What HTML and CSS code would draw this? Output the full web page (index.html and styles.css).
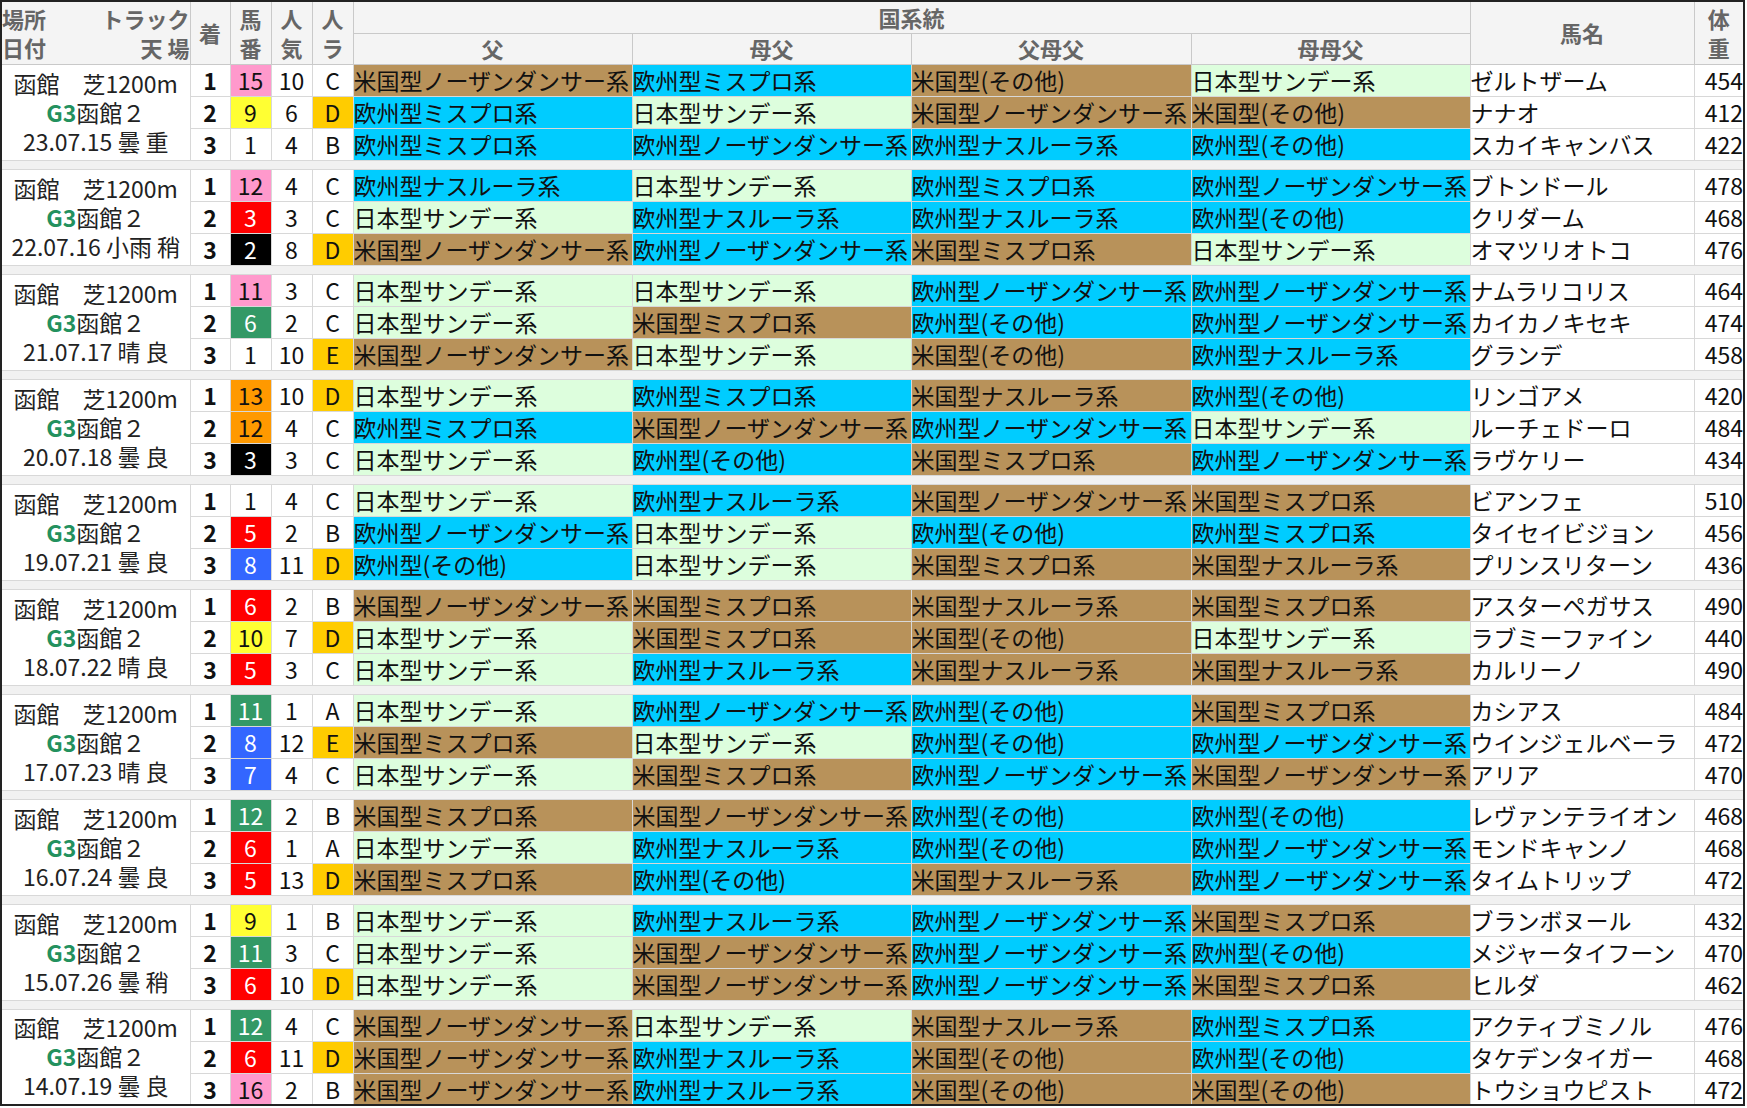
FILE: index.html
```html
<!DOCTYPE html>
<html lang="ja">
<head>
<meta charset="utf-8">
<title>函館２歳ステークス 国系統</title>
<link rel="stylesheet" href="styles.css">
</head>
<body>
<table class="tbl">
<colgroup>
<col class="c-race"><col class="c-rk"><col class="c-bn"><col class="c-pp"><col class="c-ra">
<col class="c-k"><col class="c-k"><col class="c-k2"><col class="c-k">
<col class="c-nm"><col class="c-wt">
</colgroup>
<thead>
<tr class="h1">
<th rowspan="2" class="hplace"><div class="hl"><span>場所</span><span>トラック</span></div><div class="hl"><span>日付</span><span>天&nbsp;場</span></div></th>
<th rowspan="2" class="hrk">着</th>
<th rowspan="2" class="h2l">馬<br>番</th>
<th rowspan="2" class="h2l">人<br>気</th>
<th rowspan="2" class="h2l">人<br>ラ</th>
<th colspan="4" class="hk">国系統</th>
<th rowspan="2" class="hnm">馬名</th>
<th rowspan="2" class="h2l">体<br>重</th>
</tr>
<tr class="h2">
<th class="hsub">父</th><th class="hsub">母父</th><th class="hsub">父母父</th><th class="hsub">母母父</th>
</tr>
</thead>
<tbody>
<!-- 2023 -->
<tr class="r"><td rowspan="3" class="race"><div>函館　芝1200m</div><div><span class="g3">G3</span>函館２</div><div>23.07.15 曇 重</div></td><td class="rk">1</td><td class="bn w8">15</td><td class="pp">10</td><td class="ra">C</td><td class="a">米国型ノーザンダンサー系</td><td class="e">欧州型ミスプロ系</td><td class="a">米国型(その他)</td><td class="j">日本型サンデー系</td><td class="nm">ゼルトザーム</td><td class="wt">454</td></tr>
<tr class="r"><td class="rk">2</td><td class="bn w5">9</td><td class="pp">6</td><td class="ra hi">D</td><td class="e">欧州型ミスプロ系</td><td class="j">日本型サンデー系</td><td class="a">米国型ノーザンダンサー系</td><td class="a">米国型(その他)</td><td class="nm">ナナオ</td><td class="wt">412</td></tr>
<tr class="r"><td class="rk">3</td><td class="bn w1">1</td><td class="pp">4</td><td class="ra">B</td><td class="e">欧州型ミスプロ系</td><td class="e">欧州型ノーザンダンサー系</td><td class="e">欧州型ナスルーラ系</td><td class="e">欧州型(その他)</td><td class="nm">スカイキャンバス</td><td class="wt">422</td></tr>
<tr class="sep"><td colspan="11"></td></tr>
<!-- 2022 -->
<tr class="r"><td rowspan="3" class="race"><div>函館　芝1200m</div><div><span class="g3">G3</span>函館２</div><div>22.07.16 小雨 稍</div></td><td class="rk">1</td><td class="bn w8">12</td><td class="pp">4</td><td class="ra">C</td><td class="e">欧州型ナスルーラ系</td><td class="j">日本型サンデー系</td><td class="e">欧州型ミスプロ系</td><td class="e">欧州型ノーザンダンサー系</td><td class="nm">ブトンドール</td><td class="wt">478</td></tr>
<tr class="r"><td class="rk">2</td><td class="bn w3">3</td><td class="pp">3</td><td class="ra">C</td><td class="j">日本型サンデー系</td><td class="e">欧州型ナスルーラ系</td><td class="e">欧州型ナスルーラ系</td><td class="e">欧州型(その他)</td><td class="nm">クリダーム</td><td class="wt">468</td></tr>
<tr class="r"><td class="rk">3</td><td class="bn w2">2</td><td class="pp">8</td><td class="ra hi">D</td><td class="a">米国型ノーザンダンサー系</td><td class="e">欧州型ノーザンダンサー系</td><td class="a">米国型ミスプロ系</td><td class="j">日本型サンデー系</td><td class="nm">オマツリオトコ</td><td class="wt">476</td></tr>
<tr class="sep"><td colspan="11"></td></tr>
<!-- 2021 -->
<tr class="r"><td rowspan="3" class="race"><div>函館　芝1200m</div><div><span class="g3">G3</span>函館２</div><div>21.07.17 晴 良</div></td><td class="rk">1</td><td class="bn w8">11</td><td class="pp">3</td><td class="ra">C</td><td class="j">日本型サンデー系</td><td class="j">日本型サンデー系</td><td class="e">欧州型ノーザンダンサー系</td><td class="e">欧州型ノーザンダンサー系</td><td class="nm">ナムラリコリス</td><td class="wt">464</td></tr>
<tr class="r"><td class="rk">2</td><td class="bn w6">6</td><td class="pp">2</td><td class="ra">C</td><td class="j">日本型サンデー系</td><td class="a">米国型ミスプロ系</td><td class="e">欧州型(その他)</td><td class="e">欧州型ノーザンダンサー系</td><td class="nm">カイカノキセキ</td><td class="wt">474</td></tr>
<tr class="r"><td class="rk">3</td><td class="bn w1">1</td><td class="pp">10</td><td class="ra hi">E</td><td class="a">米国型ノーザンダンサー系</td><td class="j">日本型サンデー系</td><td class="a">米国型(その他)</td><td class="e">欧州型ナスルーラ系</td><td class="nm">グランデ</td><td class="wt">458</td></tr>
<tr class="sep"><td colspan="11"></td></tr>
<!-- 2020 -->
<tr class="r"><td rowspan="3" class="race"><div>函館　芝1200m</div><div><span class="g3">G3</span>函館２</div><div>20.07.18 曇 良</div></td><td class="rk">1</td><td class="bn w7">13</td><td class="pp">10</td><td class="ra hi">D</td><td class="j">日本型サンデー系</td><td class="e">欧州型ミスプロ系</td><td class="a">米国型ナスルーラ系</td><td class="e">欧州型(その他)</td><td class="nm">リンゴアメ</td><td class="wt">420</td></tr>
<tr class="r"><td class="rk">2</td><td class="bn w7">12</td><td class="pp">4</td><td class="ra">C</td><td class="e">欧州型ミスプロ系</td><td class="a">米国型ノーザンダンサー系</td><td class="e">欧州型ノーザンダンサー系</td><td class="j">日本型サンデー系</td><td class="nm">ルーチェドーロ</td><td class="wt">484</td></tr>
<tr class="r"><td class="rk">3</td><td class="bn w2">3</td><td class="pp">3</td><td class="ra">C</td><td class="j">日本型サンデー系</td><td class="e">欧州型(その他)</td><td class="a">米国型ミスプロ系</td><td class="e">欧州型ノーザンダンサー系</td><td class="nm">ラヴケリー</td><td class="wt">434</td></tr>
<tr class="sep"><td colspan="11"></td></tr>
<!-- 2019 -->
<tr class="r"><td rowspan="3" class="race"><div>函館　芝1200m</div><div><span class="g3">G3</span>函館２</div><div>19.07.21 曇 良</div></td><td class="rk">1</td><td class="bn w1">1</td><td class="pp">4</td><td class="ra">C</td><td class="j">日本型サンデー系</td><td class="e">欧州型ナスルーラ系</td><td class="a">米国型ノーザンダンサー系</td><td class="a">米国型ミスプロ系</td><td class="nm">ビアンフェ</td><td class="wt">510</td></tr>
<tr class="r"><td class="rk">2</td><td class="bn w3">5</td><td class="pp">2</td><td class="ra">B</td><td class="e">欧州型ノーザンダンサー系</td><td class="j">日本型サンデー系</td><td class="e">欧州型(その他)</td><td class="e">欧州型ミスプロ系</td><td class="nm">タイセイビジョン</td><td class="wt">456</td></tr>
<tr class="r"><td class="rk">3</td><td class="bn w4">8</td><td class="pp">11</td><td class="ra hi">D</td><td class="e">欧州型(その他)</td><td class="j">日本型サンデー系</td><td class="a">米国型ミスプロ系</td><td class="a">米国型ナスルーラ系</td><td class="nm">プリンスリターン</td><td class="wt">436</td></tr>
<tr class="sep"><td colspan="11"></td></tr>
<!-- 2018 -->
<tr class="r"><td rowspan="3" class="race"><div>函館　芝1200m</div><div><span class="g3">G3</span>函館２</div><div>18.07.22 晴 良</div></td><td class="rk">1</td><td class="bn w3">6</td><td class="pp">2</td><td class="ra">B</td><td class="a">米国型ノーザンダンサー系</td><td class="a">米国型ミスプロ系</td><td class="a">米国型ナスルーラ系</td><td class="a">米国型ミスプロ系</td><td class="nm">アスターペガサス</td><td class="wt">490</td></tr>
<tr class="r"><td class="rk">2</td><td class="bn w5">10</td><td class="pp">7</td><td class="ra hi">D</td><td class="j">日本型サンデー系</td><td class="a">米国型ミスプロ系</td><td class="a">米国型(その他)</td><td class="j">日本型サンデー系</td><td class="nm">ラブミーファイン</td><td class="wt">440</td></tr>
<tr class="r"><td class="rk">3</td><td class="bn w3">5</td><td class="pp">3</td><td class="ra">C</td><td class="j">日本型サンデー系</td><td class="e">欧州型ナスルーラ系</td><td class="a">米国型ナスルーラ系</td><td class="a">米国型ナスルーラ系</td><td class="nm">カルリーノ</td><td class="wt">490</td></tr>
<tr class="sep"><td colspan="11"></td></tr>
<!-- 2017 -->
<tr class="r"><td rowspan="3" class="race"><div>函館　芝1200m</div><div><span class="g3">G3</span>函館２</div><div>17.07.23 晴 良</div></td><td class="rk">1</td><td class="bn w6">11</td><td class="pp">1</td><td class="ra">A</td><td class="j">日本型サンデー系</td><td class="e">欧州型ノーザンダンサー系</td><td class="e">欧州型(その他)</td><td class="a">米国型ミスプロ系</td><td class="nm">カシアス</td><td class="wt">484</td></tr>
<tr class="r"><td class="rk">2</td><td class="bn w4">8</td><td class="pp">12</td><td class="ra hi">E</td><td class="a">米国型ミスプロ系</td><td class="j">日本型サンデー系</td><td class="e">欧州型(その他)</td><td class="e">欧州型ノーザンダンサー系</td><td class="nm">ウインジェルベーラ</td><td class="wt">472</td></tr>
<tr class="r"><td class="rk">3</td><td class="bn w4">7</td><td class="pp">4</td><td class="ra">C</td><td class="j">日本型サンデー系</td><td class="a">米国型ミスプロ系</td><td class="e">欧州型ノーザンダンサー系</td><td class="a">米国型ノーザンダンサー系</td><td class="nm">アリア</td><td class="wt">470</td></tr>
<tr class="sep"><td colspan="11"></td></tr>
<!-- 2016 -->
<tr class="r"><td rowspan="3" class="race"><div>函館　芝1200m</div><div><span class="g3">G3</span>函館２</div><div>16.07.24 曇 良</div></td><td class="rk">1</td><td class="bn w6">12</td><td class="pp">2</td><td class="ra">B</td><td class="a">米国型ミスプロ系</td><td class="a">米国型ノーザンダンサー系</td><td class="e">欧州型(その他)</td><td class="e">欧州型(その他)</td><td class="nm">レヴァンテライオン</td><td class="wt">468</td></tr>
<tr class="r"><td class="rk">2</td><td class="bn w3">6</td><td class="pp">1</td><td class="ra">A</td><td class="j">日本型サンデー系</td><td class="e">欧州型ナスルーラ系</td><td class="e">欧州型(その他)</td><td class="e">欧州型ノーザンダンサー系</td><td class="nm">モンドキャンノ</td><td class="wt">468</td></tr>
<tr class="r"><td class="rk">3</td><td class="bn w3">5</td><td class="pp">13</td><td class="ra hi">D</td><td class="a">米国型ミスプロ系</td><td class="e">欧州型(その他)</td><td class="a">米国型ナスルーラ系</td><td class="e">欧州型ノーザンダンサー系</td><td class="nm">タイムトリップ</td><td class="wt">472</td></tr>
<tr class="sep"><td colspan="11"></td></tr>
<!-- 2015 -->
<tr class="r"><td rowspan="3" class="race"><div>函館　芝1200m</div><div><span class="g3">G3</span>函館２</div><div>15.07.26 曇 稍</div></td><td class="rk">1</td><td class="bn w5">9</td><td class="pp">1</td><td class="ra">B</td><td class="j">日本型サンデー系</td><td class="e">欧州型ナスルーラ系</td><td class="e">欧州型ノーザンダンサー系</td><td class="a">米国型ミスプロ系</td><td class="nm">ブランボヌール</td><td class="wt">432</td></tr>
<tr class="r"><td class="rk">2</td><td class="bn w6">11</td><td class="pp">3</td><td class="ra">C</td><td class="j">日本型サンデー系</td><td class="a">米国型ノーザンダンサー系</td><td class="e">欧州型ノーザンダンサー系</td><td class="e">欧州型(その他)</td><td class="nm">メジャータイフーン</td><td class="wt">470</td></tr>
<tr class="r"><td class="rk">3</td><td class="bn w3">6</td><td class="pp">10</td><td class="ra hi">D</td><td class="j">日本型サンデー系</td><td class="a">米国型ノーザンダンサー系</td><td class="e">欧州型ノーザンダンサー系</td><td class="a">米国型ミスプロ系</td><td class="nm">ヒルダ</td><td class="wt">462</td></tr>
<tr class="sep"><td colspan="11"></td></tr>
<!-- 2014 -->
<tr class="r"><td rowspan="3" class="race"><div>函館　芝1200m</div><div><span class="g3">G3</span>函館２</div><div>14.07.19 曇 良</div></td><td class="rk">1</td><td class="bn w6">12</td><td class="pp">4</td><td class="ra">C</td><td class="a">米国型ノーザンダンサー系</td><td class="j">日本型サンデー系</td><td class="a">米国型ナスルーラ系</td><td class="e">欧州型ミスプロ系</td><td class="nm">アクティブミノル</td><td class="wt">476</td></tr>
<tr class="r"><td class="rk">2</td><td class="bn w3">6</td><td class="pp">11</td><td class="ra hi">D</td><td class="a">米国型ノーザンダンサー系</td><td class="e">欧州型ナスルーラ系</td><td class="a">米国型(その他)</td><td class="e">欧州型(その他)</td><td class="nm">タケデンタイガー</td><td class="wt">468</td></tr>
<tr class="r"><td class="rk">3</td><td class="bn w8">16</td><td class="pp">2</td><td class="ra">B</td><td class="a">米国型ノーザンダンサー系</td><td class="e">欧州型ナスルーラ系</td><td class="a">米国型(その他)</td><td class="a">米国型(その他)</td><td class="nm">トウショウピスト</td><td class="wt">472</td></tr>
</tbody>
</table>
</body>
</html>
```

FILE: styles.css
```css
* { box-sizing: border-box; }

body {
  margin: 0;
  background: #ffffff;
  font-family: "Noto Sans CJK JP", "Noto Sans", sans-serif;
  color: #111111;
}

.tbl {
  border-collapse: collapse;
  table-layout: fixed;
  width: 1744px;
  border: 2px solid #222222;
  font-size: 23px;
}

.c-race { width: 189px; }
.c-rk { width: 40px; }
.c-bn { width: 41px; }
.c-pp { width: 41px; }
.c-ra { width: 41px; }
.c-k { width: 279px; }
.c-k2 { width: 280px; }
.c-nm { width: 224px; }
.c-wt { width: 50px; }

.tbl th,
.tbl td {
  border: 1px solid #d8d8d8;
  padding: 0;
  overflow: hidden;
  white-space: nowrap;
  vertical-align: middle;
}

/* header */
.tbl th {
  background: #f4f4f4;
  color: #666666;
  font-weight: bold;
  font-size: 22px;
  line-height: 29px;
  border-color: #c9c9c9;
  text-align: center;
}

.h1 { height: 32px; }
.h2 { height: 31px; }

.hplace {
  padding: 0 13px 0 12px;
  line-height: 26px;
}

.hl {
  display: flex;
  justify-content: space-between;
}

.hrk { padding-top: 8px; }
.hnm { padding-top: 6px; }
.hk { vertical-align: top; padding-top: 0; }
.hsub { padding-top: 3px; }

/* body rows */
.r { height: 32px; }
.r td { line-height: 30px; }

.sep td {
  height: 9px;
  background: #f1f1f1;
  border-left-color: #f1f1f1;
  border-right-color: #f1f1f1;
}

.race {
  text-align: center;
  color: #222222;
  line-height: 29px !important;
  padding-top: 3px;
}

.g3 {
  color: #23915e;
  font-weight: bold;
}

.rk {
  text-align: center;
  font-weight: bold;
}

.bn,
.pp,
.ra {
  text-align: center;
}

.ra.hi { background: #ffcc00; }

/* frame colours */
.w1 { background: #ffffff; color: #111111; }
.w2 { background: #000000; color: #ffffff; }
.w3 { background: #ff0000; color: #ffffff; }
.w4 { background: #3366ff; color: #ffffff; }
.w5 { background: #ffff33; color: #111111; }
.w6 { background: #339966; color: #ffffff; }
.w7 { background: #ff9900; color: #111111; }
.w8 { background: #ff99cc; color: #111111; }

/* lineage colours */
.a,
.e,
.j {
  padding-left: 1px;
  border-color: #eeeeee;
}

.a { background: #b8925a; }
.e { background: #00ccff; }
.j { background: #ddfedd; }

.nm {
  padding-left: 4px;
}

.wt {
  text-align: right;
  padding-right: 3px;
}
```
